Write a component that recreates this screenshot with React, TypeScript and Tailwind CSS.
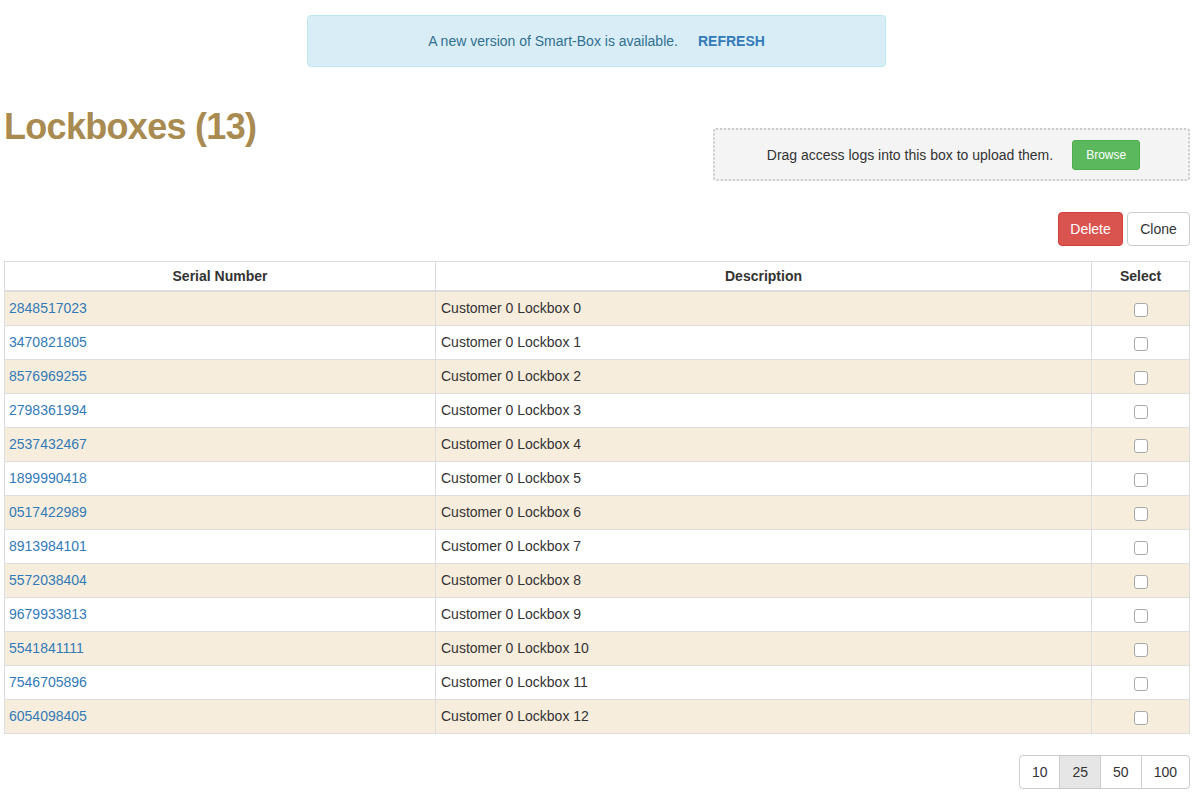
import React from 'react';

const rows = [
  '2848517023',
  '3470821805',
  '8576969255',
  '2798361994',
  '2537432467',
  '1899990418',
  '0517422989',
  '8913984101',
  '5572038404',
  '9679933813',
  '5541841111',
  '7546705896',
  '6054098405',
];

export default function App() {
  return (
    <div className="min-h-[802px] bg-white text-[14px] leading-5 text-[#333] font-['Liberation_Sans',Arial,sans-serif]">
      <div className="w-[1186px] ml-[4px]">
        {/* Update notice */}
        <div className="pt-[15px]">
          <div className="ml-[303px] w-[579px] h-[52px] flex items-center justify-center rounded-[4px] border border-[#bce8f1] bg-[#d9edf7] text-[#31708f]">
            <span>A new version of Smart-Box is available.</span>
            <a className="ml-[20px] font-bold text-[#337ab7]">REFRESH</a>
          </div>
        </div>

        {/* Title + upload box */}
        <div className="flex items-start justify-between">
          <h1 className="mt-[40px] text-[36px] leading-[40px] font-bold tracking-[-0.7px] text-[#a98a50]">Lockboxes (13)</h1>
          <div className="mt-[61px] w-[477px] h-[53px] flex items-center justify-center gap-[19px] rounded-[3px] border-2 border-dotted border-[#cccccc] bg-[#f4f4f4]">
            <span className="ml-[4px]">Drag access logs into this box to upload them.</span>
            <button className="h-[30px] px-[13px] rounded-[3px] border border-[#4cae4c] bg-[#5cb85c] text-[12px] text-white">
              Browse
            </button>
          </div>
        </div>

        {/* Actions */}
        <div className="mt-[31px] flex justify-end gap-[4px]">
          <button className="h-[34px] w-[65px] rounded-[4px] border border-[#d43f3a] bg-[#d9534f] text-white">Delete</button>
          <button className="h-[34px] w-[63px] rounded-[4px] border border-[#cccccc] bg-white text-[#333]">Clone</button>
        </div>

        {/* Lockbox table */}
        <table className="mt-[15px] w-full border-collapse table-fixed">
          <colgroup>
            <col className="w-[431px]" />
            <col className="w-[656px]" />
            <col />
          </colgroup>
          <thead>
            <tr>
              <th className="border border-[#dddddd] border-b-2 py-[4px] px-[5px] text-center font-bold">Serial Number</th>
              <th className="border border-[#dddddd] border-b-2 py-[4px] px-[5px] text-center font-bold">Description</th>
              <th className="border border-[#dddddd] border-b-2 py-[4px] px-[5px] text-center font-bold">Select</th>
            </tr>
          </thead>
          <tbody>
            {rows.map((serial, i) => (
              <tr key={serial} className={i % 2 === 0 ? 'bg-[#f7eddd]' : 'bg-white'}>
                <td className="border border-[#dddddd] pt-[6px] pb-[7px] pl-[4px] pr-[5px]">
                  <a className="text-[#337ab7]">{serial}</a>
                </td>
                <td className="border border-[#dddddd] pt-[6px] pb-[7px] px-[5px]">Customer 0 Lockbox {i}</td>
                <td className="border border-[#dddddd] pt-[6px] pb-[7px] px-[5px]">
                  <div className="flex justify-center pt-[3px]">
                    <span className="block w-[14px] h-[14px] rounded-[3px] border border-[#a9a9a9] bg-white" />
                  </div>
                </td>
              </tr>
            ))}
          </tbody>
        </table>

        {/* Page size */}
        <div className="mt-[21px] flex justify-end">
          <div className="flex">
            {['10', '25', '50', '100'].map((n, i) => (
              <button
                key={n}
                className={
                  'h-[34px] px-[12px] border border-[#cccccc] text-[#333] ' +
                  (i > 0 ? '-ml-px ' : '') +
                  (i === 0 ? 'rounded-l-[4px] ' : '') +
                  (i === 3 ? 'rounded-r-[4px] ' : '') +
                  (n === '25' ? 'bg-[#e6e6e6] border-[#adadad] relative z-10' : 'bg-white')
                }
              >
                {n}
              </button>
            ))}
          </div>
        </div>
      </div>
    </div>
  );
}
